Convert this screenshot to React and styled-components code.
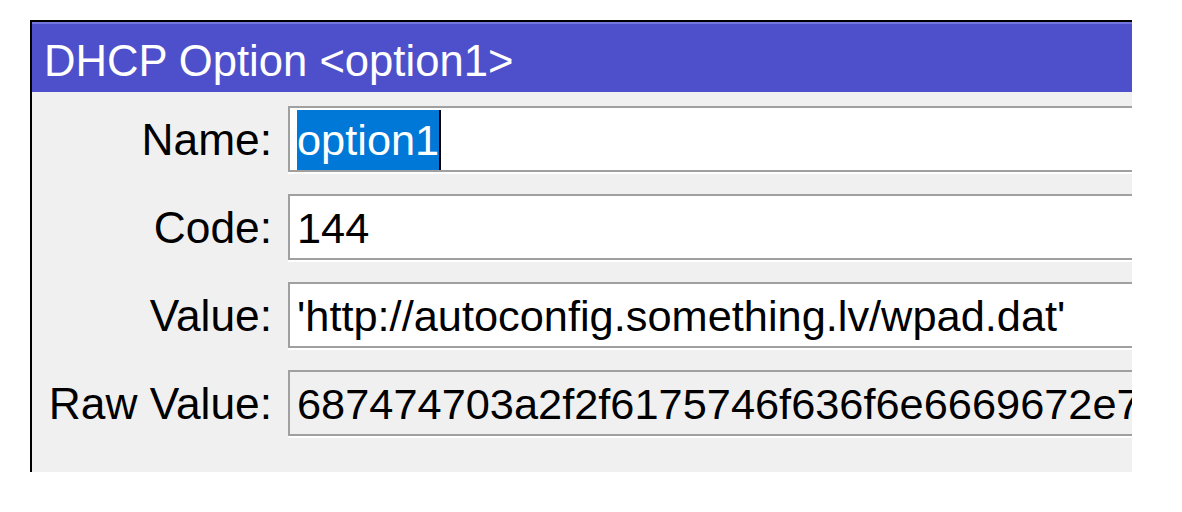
import React from 'react';
import styled, { createGlobalStyle } from 'styled-components';

const GlobalStyle = createGlobalStyle`
   html, body {
      margin: 0;
      padding: 0;
      background: #ffffff;
   }
   body {
      font-family: "Liberation Sans", Arial, sans-serif;
   }
`;

const Page = styled.div`
   width: 1182px;
   height: 512px;
   padding: 20px 0 0 30px;
   box-sizing: border-box;
   overflow: hidden;
`;

const Window = styled.div`
   width: 1102px;
   height: 452px;
   box-sizing: border-box;
   border-top: 2px solid #000000;
   border-left: 2px solid #000000;
   background: #f0f0f0;
   overflow: hidden;
`;

const TitleBar = styled.div`
   height: 70px;
   box-sizing: border-box;
   border-top: 2px solid #7577e0;
   background: #4e50cb;
   padding: 16px 0 0 12px;
   color: #ffffff;
   font-size: 43.6px;
   line-height: 43px;
   white-space: nowrap;
`;

const Form = styled.div`
   display: grid;
   grid-template-columns: 240px minmax(0, 1fr);
   column-gap: 16px;
   row-gap: 22px;
   padding-top: 14px;
`;

const Label = styled.div`
   height: 66px;
   box-sizing: border-box;
   padding-top: 4px;
   text-align: right;
   font-size: 44.3px;
   line-height: 60px;
   color: #000000;
   white-space: nowrap;
`;

const Field = styled.div`
   width: 900px;
   height: 66px;
   box-sizing: border-box;
   border: 2px solid #a0a0a0;
   padding: 2px 0 0 7px;
   background: ${p => (p.readOnly ? '#f0f0f0' : '#ffffff')};
   box-shadow: 0 2px 0 #ffffff;
   font-size: 43.35px;
   line-height: 60px;
   color: #000000;
   white-space: nowrap;
   overflow: hidden;
`;

const Selected = styled.span`
   display: inline-block;
   background: #0078d7;
   color: #ffffff;
   border-right: 2px solid #000000;
   line-height: 60px;
   vertical-align: top;
`;

const rows = [
   { label: 'Code:', value: '144' },
   { label: 'Value:', value: "'http://autoconfig.something.lv/wpad.dat'" },
   { label: 'Raw Value:', value: '687474703a2f2f6175746f636f6e6669672e736f6d657468696e672e6c762f777061642e646174', readOnly: true },
];

const App = () => {
   return (
      <Page>
         <GlobalStyle />
         <Window>
            <TitleBar>DHCP Option &lt;option1&gt;</TitleBar>
            <Form>
               <Label>Name:</Label>
               <Field>
                  <Selected>option1</Selected>
               </Field>
               {rows.map(r => (
                  <React.Fragment key={r.label}>
                     <Label>{r.label}</Label>
                     <Field readOnly={r.readOnly}>{r.value}</Field>
                  </React.Fragment>
               ))}
            </Form>
         </Window>
      </Page>
   );
};

export default App;
